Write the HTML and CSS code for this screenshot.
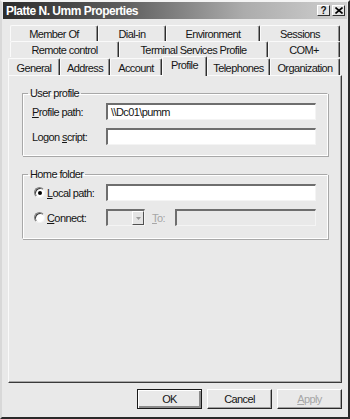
FILE: index.html
```html
<!DOCTYPE html>
<html lang="en">
<head>
    <meta charset="UTF-8">
    <meta name="viewport" content="width=device-width, initial-scale=1.0">
    <title>Platte N. Umm Properties</title>
    <link rel="stylesheet" href="styles.css">
</head>
<body>
    <div class="window">
        <div class="titlebar">
            <span class="title">Platte N. Umm Properties</span>
            <div class="caption-buttons">
                <span class="cap-btn help">?</span>
                <span class="cap-btn close">
                    <svg width="8" height="7" viewBox="0 0 8 7">
                        <path d="M0.5 0.5 L7.5 6.5 M7.5 0.5 L0.5 6.5" stroke="#000" stroke-width="1.6"/>
                    </svg>
                </span>
            </div>
        </div>

        <div class="tabs">
            <div class="tab-row row-1">
                <div class="tab">Member Of</div>
                <div class="tab">Dial-in</div>
                <div class="tab">Environment</div>
                <div class="tab">Sessions</div>
            </div>
            <div class="tab-row row-2">
                <div class="tab">Remote control</div>
                <div class="tab">Terminal Services Profile</div>
                <div class="tab">COM+</div>
            </div>
            <div class="tab-row row-3">
                <div class="tab">General</div>
                <div class="tab">Address</div>
                <div class="tab">Account</div>
                <div class="tab selected">Profile</div>
                <div class="tab">Telephones</div>
                <div class="tab">Organization</div>
            </div>
        </div>

        <div class="panel">
            <fieldset class="group user-profile">
                <legend>User profile</legend>
                <div class="field-row">
                    <label class="field-label"><u>P</u>rofile path:</label>
                    <div class="textbox">\\Dc01\pumm</div>
                </div>
                <div class="field-row">
                    <label class="field-label">Logon <u>s</u>cript:</label>
                    <div class="textbox"></div>
                </div>
            </fieldset>

            <fieldset class="group home-folder">
                <legend>Home folder</legend>
                <div class="field-row">
                    <span class="radio checked"></span>
                    <label class="field-label radio-label"><u>L</u>ocal path:</label>
                    <div class="textbox"></div>
                </div>
                <div class="field-row">
                    <span class="radio"></span>
                    <label class="field-label radio-label"><u>C</u>onnect:</label>
                    <div class="combo">
                        <span class="combo-value"></span>
                        <span class="combo-arrow">
                            <svg width="5" height="3" viewBox="0 0 5 3"><path d="M0 0 H5 L2.5 3 Z" fill="#9a9a9a"/></svg>
                        </span>
                    </div>
                    <span class="to-label"><u>T</u>o:</span>
                    <div class="textbox disabled"></div>
                </div>
            </fieldset>
        </div>

        <div class="footer">
            <button class="btn default">OK</button>
            <button class="btn">Cancel</button>
            <button class="btn disabled"><u>A</u>pply</button>
        </div>
    </div>
</body>
</html>
```

FILE: styles.css
```css
body {
    margin: 0;
    padding: 0;
    background-color: #fff;
    font-family: "Liberation Sans", Arial, sans-serif;
    font-size: 11px;
    letter-spacing: -0.6px;
    color: #151515;
}

.window {
    width: 350px;
    height: 419px;
    box-sizing: border-box;
    background-color: #e9e9e9;
    border-top: 2px solid #f4f4f4;
    border-left: 2px solid #d8d8d8;
    border-right: 2px solid #2a2a2a;
    border-bottom: 2px solid #2a2a2a;
    display: flex;
    flex-direction: column;
}

.titlebar {
    height: 17px;
    margin: 0 1px;
    display: flex;
    align-items: center;
    justify-content: space-between;
    padding: 0 2px 0 3px;
    background: linear-gradient(to right, #2c2c2c 0%, #5e5e5e 35%, #acacac 70%, #d0d0d0 100%);
}

.title {
    color: #fff;
    font-weight: bold;
    font-size: 12px;
    letter-spacing: -0.5px;
}

.caption-buttons {
    display: flex;
    gap: 2px;
}

.cap-btn {
    width: 13px;
    height: 11px;
    box-sizing: border-box;
    display: flex;
    align-items: center;
    justify-content: center;
    background-color: #e4e4e4;
    border-top: 1px solid #fff;
    border-left: 1px solid #fff;
    border-right: 1px solid #303030;
    border-bottom: 1px solid #303030;
    font-size: 10px;
    font-weight: bold;
    letter-spacing: 0;
    line-height: 1;
}

.tabs {
    margin-top: 6px;
}

.tab-row {
    display: flex;
    height: 16px;
}

.row-1, .row-2 {
    margin-left: 8px;
    width: 330px;
}

.row-3 {
    margin-left: 6px;
    width: 332px;
    height: 18px;
    align-items: flex-end;
}

.tab {
    box-sizing: border-box;
    height: 16px;
    display: flex;
    align-items: center;
    justify-content: center;
    border-top: 1px solid #fafafa;
    border-left: 1px solid #fafafa;
    border-right: 1px solid #2e2e2e;
    box-shadow: inset -1px 0 0 #909090;
    border-radius: 2px 2px 0 0;
    white-space: nowrap;
}

.row-1 .tab:nth-child(1) { width: 88px; }
.row-1 .tab:nth-child(2) { width: 68px; }
.row-1 .tab:nth-child(3) { width: 94px; }
.row-1 .tab:nth-child(4) { width: 80px; }

.row-2 .tab:nth-child(1) { width: 109px; }
.row-2 .tab:nth-child(2) { width: 149px; }
.row-2 .tab:nth-child(3) { width: 72px; }

.row-3 .tab:nth-child(1) { width: 52px; }
.row-3 .tab:nth-child(2) { width: 50px; }
.row-3 .tab:nth-child(3) { width: 52px; }
.row-3 .tab:nth-child(4) { width: 45px; }
.row-3 .tab:nth-child(5) { width: 63px; }
.row-3 .tab:nth-child(6) { width: 70px; }

.row-3 .tab {
    height: 17px;
    padding-top: 1px;
}

.tab.selected {
    position: relative;
    z-index: 1;
    height: 20px;
    margin-bottom: -1px;
    padding-bottom: 4px;
    background-color: #e9e9e9;
}

.panel {
    box-sizing: border-box;
    margin-left: 6px;
    width: 334px;
    height: 308px;
    padding: 11px 12px 0 13px;
    border-top: 1px solid #fafafa;
    border-left: 1px solid #fafafa;
    border-right: 1px solid #3a3a3a;
    border-bottom: 1px solid #3a3a3a;
    box-shadow: inset -1px -1px 0 #a8a8a8;
}

.group {
    width: 306px;
    box-sizing: border-box;
    margin: 0;
    padding: 0 9px 10px 9px;
    border: 1px solid;
    border-color: #a8a8a8 #fff #fff #a8a8a8;
    box-shadow: inset 1px 1px 0 #fff, 1px 1px 0 #a8a8a8;
}

.group legend {
    padding: 0 2px;
    margin-left: -4px;
    line-height: 12px;
}

.home-folder {
    margin-top: 12px;
    padding-bottom: 12px;
}

.field-row {
    display: flex;
    align-items: center;
    margin-top: 4px;
}

.field-row + .field-row {
    margin-top: 8px;
}

.field-label {
    width: 74px;
    flex-shrink: 0;
}

.radio-label {
    width: 59px;
}

.radio {
    width: 11px;
    height: 11px;
    box-sizing: border-box;
    flex-shrink: 0;
    border-radius: 50%;
    margin: 0 2px 0 2px;
    background-color: #fff;
    border: 1px solid;
    border-color: #808080 #f4f4f4 #f4f4f4 #808080;
    box-shadow: inset 1px 1px 0 #404040;
    display: flex;
    align-items: center;
    justify-content: center;
}

.radio.checked::after {
    content: "";
    width: 4px;
    height: 4px;
    border-radius: 50%;
    background-color: #000;
}

.textbox {
    box-sizing: border-box;
    width: 210px;
    height: 17px;
    padding: 1px 3px;
    background-color: #fff;
    border-top: 2px solid #6e6e6e;
    border-left: 2px solid #6e6e6e;
    border-right: 1px solid #f4f4f4;
    border-bottom: 1px solid #f4f4f4;
    line-height: 12px;
}

.textbox.disabled {
    width: 141px;
    background-color: #e9e9e9;
}

.combo {
    box-sizing: border-box;
    width: 39px;
    height: 17px;
    display: flex;
    justify-content: flex-end;
    background-color: #e9e9e9;
    border-top: 2px solid #6e6e6e;
    border-left: 2px solid #6e6e6e;
    border-right: 1px solid #f4f4f4;
    border-bottom: 1px solid #f4f4f4;
}

.combo-arrow {
    box-sizing: border-box;
    width: 12px;
    height: 14px;
    display: flex;
    align-items: center;
    justify-content: center;
    background-color: #e4e4e4;
    border-top: 1px solid #fff;
    border-left: 1px solid #fff;
    border-right: 1px solid #505050;
    border-bottom: 1px solid #505050;
}

.to-label {
    width: 23px;
    margin-left: 7px;
    color: #a6a6a6;
}

.footer {
    display: flex;
    justify-content: flex-end;
    gap: 5px;
    margin-top: 6px;
    padding-right: 6px;
}

.btn {
    box-sizing: border-box;
    width: 65px;
    height: 20px;
    padding: 0;
    font-family: "Liberation Sans", Arial, sans-serif;
    font-size: 11px;
    letter-spacing: -0.6px;
    color: #151515;
    background-color: #e9e9e9;
    border-top: 1px solid #fff;
    border-left: 1px solid #fff;
    border-right: 1px solid #2a2a2a;
    border-bottom: 1px solid #2a2a2a;
    box-shadow: inset -1px -1px 0 #a0a0a0;
}

.btn.default {
    border: 1px solid #1a1a1a;
    box-shadow: inset 1px 1px 0 #fff, inset -2px -2px 0 #8a8a8a;
}

.btn.disabled {
    color: #a6a6a6;
}
```
